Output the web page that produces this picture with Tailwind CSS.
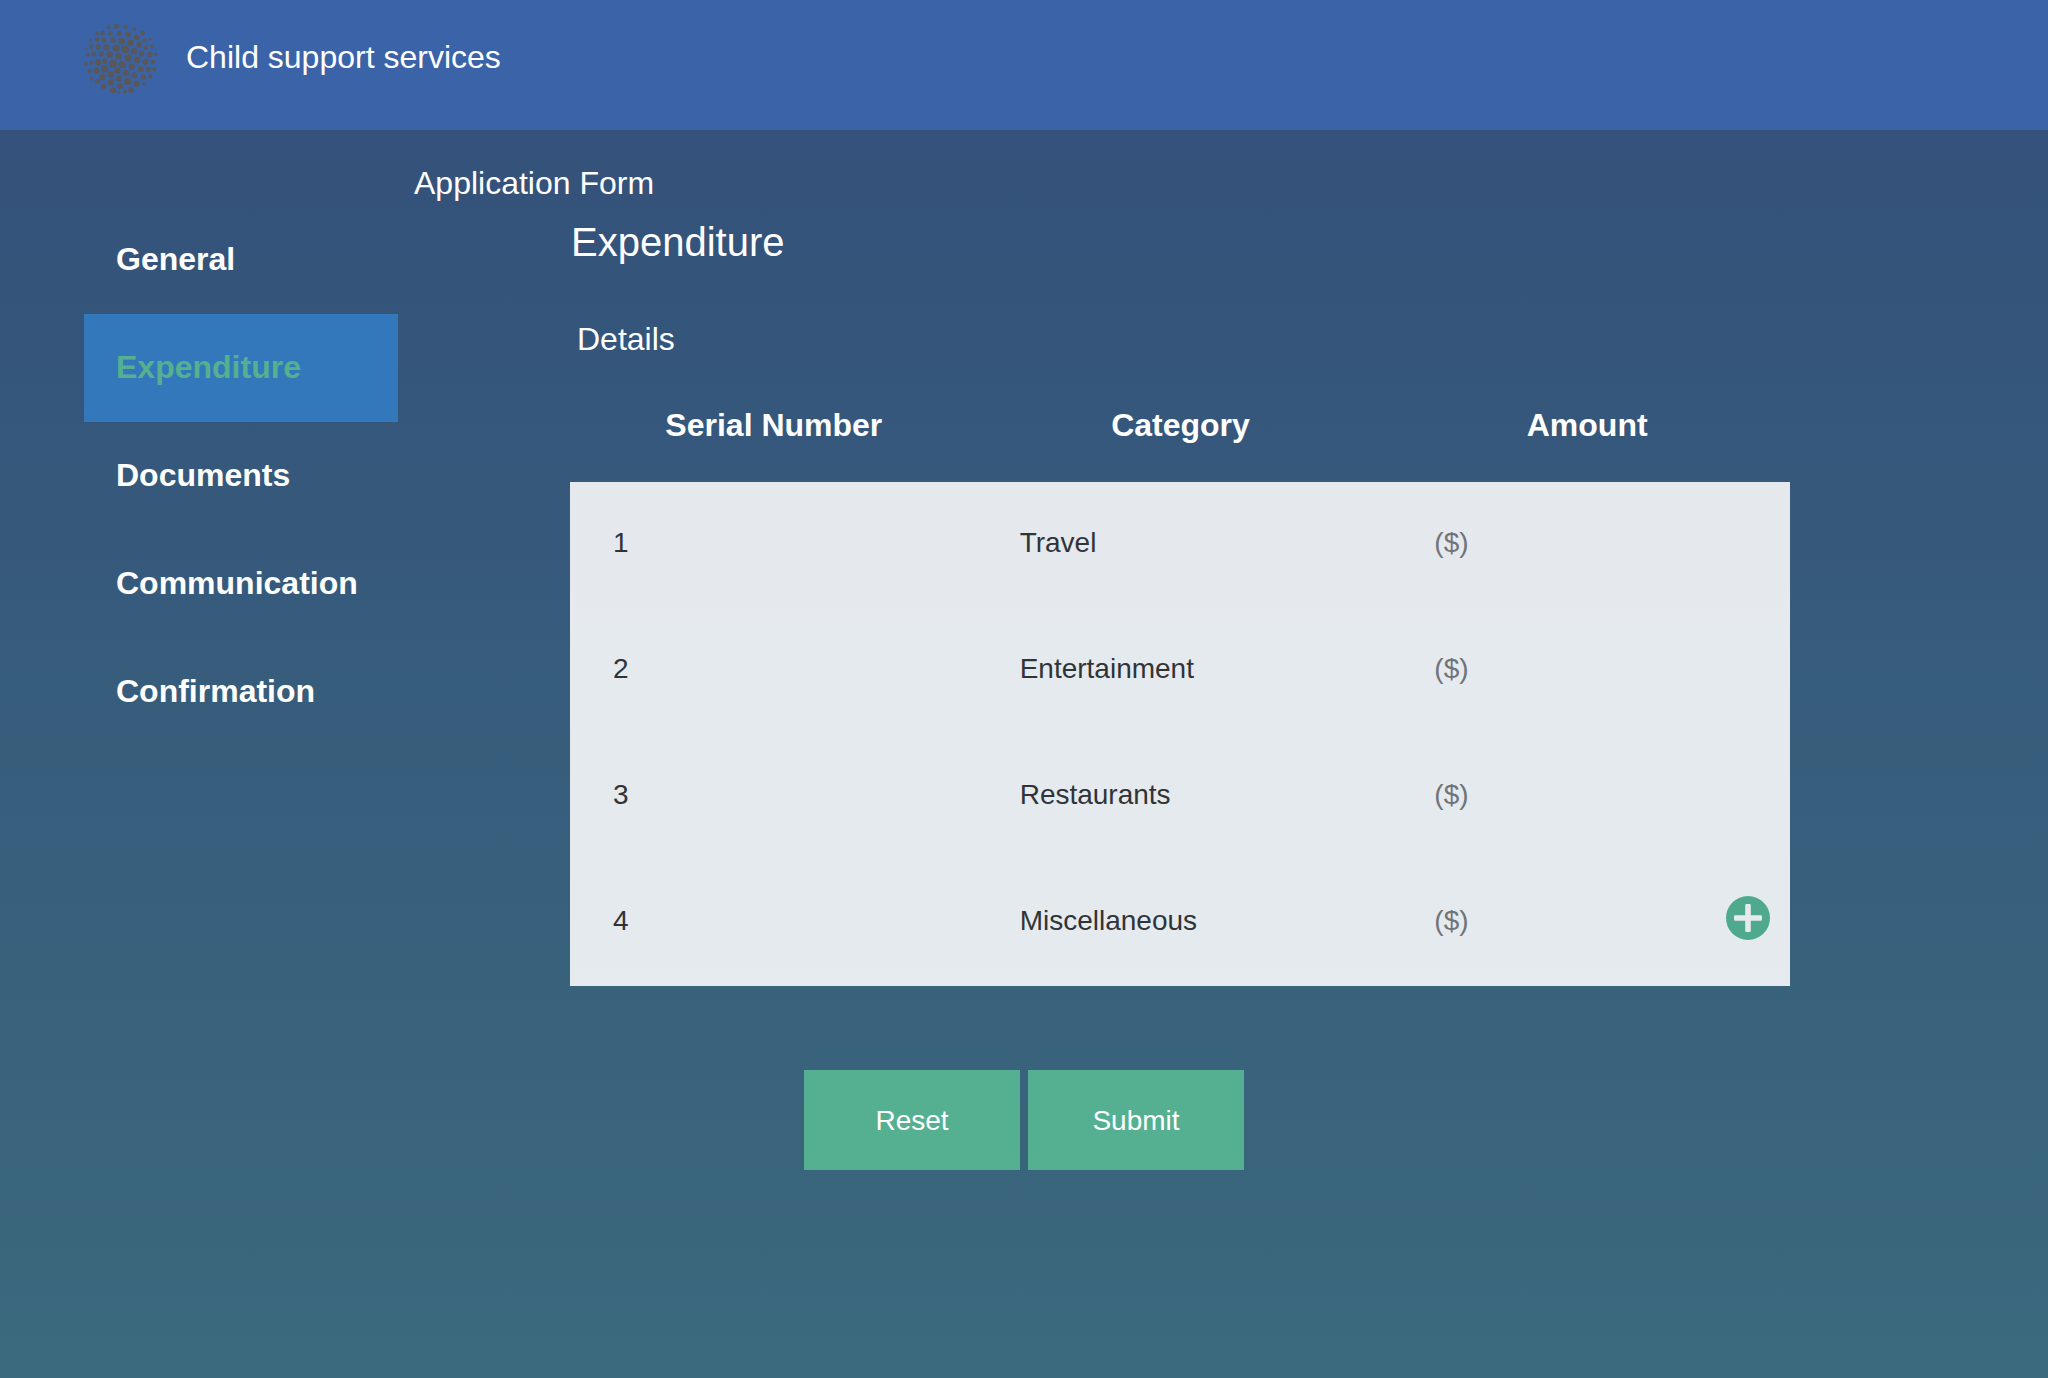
<!DOCTYPE html>
<html lang="en">
<head>
<meta charset="utf-8">
<title>Child support services</title>
<script src="https://cdn.jsdelivr.net/npm/@tailwindcss/browser@4"></script>
</head>
<body class="h-[1378px] flex flex-col overflow-hidden font-['Liberation_Sans',Arial,sans-serif] text-white bg-linear-to-b from-[#334f7a] to-[#3b697d]">
<header class="flex h-[130px] shrink-0 bg-[#3b63a8] pl-[84px] pt-[22px]">
  <svg class="size-[74px] shrink-0" viewBox="42 36 222 222" aria-hidden="true"><g id="dots" fill="#58585a"></g></svg>
  <h1 class="pl-[28px] pt-[17px] text-[32px] leading-[36px]">Child support services</h1>
</header>
<main class="flex flex-1 flex-col">
  <h2 class="pt-[35px] pl-[414px] text-[32px] leading-[36px]">Application Form</h2>
  <div class="flex items-start pl-[84px]">
    <nav class="mt-[5px] flex w-[314px] flex-col text-[32px] font-bold leading-[36px]">
      <a class="h-[108px] px-8 pt-[35px]">General</a>
      <a class="h-[108px] bg-[#3478bc] px-8 pt-[35px] text-[#55af91]">Expenditure</a>
      <a class="h-[108px] px-8 pt-[35px]">Documents</a>
      <a class="h-[108px] px-8 pt-[35px]">Communication</a>
      <a class="h-[108px] px-8 pt-[35px]">Confirmation</a>
    </nav>
    <section class="ml-[172px] w-[1220px]">
      <h3 class="mt-[19px] pl-px text-[40px] leading-[44px]">Expenditure</h3>
      <h4 class="mt-[57px] pl-[7px] text-[32px] leading-[36px]">Details</h4>
      <div class="mt-[50px] grid h-[75px] grid-cols-3 text-center text-[32px] font-bold leading-[36px]">
        <div class="pl-px">Serial Number</div><div class="pl-px">Category</div><div class="pl-px">Amount</div>
      </div>
      <div class="bg-white/87 text-[28px] leading-[32px] text-[#303437]">
        <div class="grid h-[126px] grid-cols-3 pt-[45px]"><div class="pl-[43px]">1</div><div class="pl-[43px]">Travel</div><div class="pl-[51px] text-[#707478]">($)</div></div>
        <div class="grid h-[126px] grid-cols-3 pt-[45px]"><div class="pl-[43px]">2</div><div class="pl-[43px]">Entertainment</div><div class="pl-[51px] text-[#707478]">($)</div></div>
        <div class="grid h-[126px] grid-cols-3 pt-[45px]"><div class="pl-[43px]">3</div><div class="pl-[43px]">Restaurants</div><div class="pl-[51px] text-[#707478]">($)</div></div>
        <div class="grid h-[126px] grid-cols-3 pt-[36px]"><div class="pl-[43px] pt-[9px]">4</div><div class="pl-[43px] pt-[9px]">Miscellaneous</div>
          <div class="flex justify-between pl-[51px] pr-[20px] text-[#707478]"><span class="pt-[9px]">($)</span>
            <svg class="size-[44px]" viewBox="0 0 44 44"><circle cx="22" cy="22" r="22" fill="#4fa98c"/><path fill="#e6eaed" d="M20.4 8h3.2q1.2 0 1.2 1.2v10h10q1.2 0 1.2 1.2v3.2q0 1.2-1.2 1.2h-10v10q0 1.2-1.2 1.2h-3.2q-1.2 0-1.2-1.2v-10h-10q-1.2 0-1.2-1.2v-3.2q0-1.2 1.2-1.2h10v-10Q19.200 8 20.4 8Z"/></svg>
          </div>
        </div>
      </div>
    </section>
  </div>
  <div class="mt-[84px] flex justify-center gap-2 text-[28px] leading-[32px]">
    <button class="h-[100px] w-[216px] bg-[#55af91] pt-px">Reset</button>
    <button class="h-[100px] w-[216px] bg-[#55af91] pt-px">Submit</button>
  </div>
</main>
<script>
  // Logo dots: x, y, radius
  const dots = [
    [116,52,5],[139,49,7],[167,50,6],[193,57,5],[81,70,5],[98,69,6],[122,70,6],[148,70,7],[174,74,8],[200,81,8],[218,69,6],
    [61,91,4.500],[81,89,6.500],[102,90,7],[129,90,8],[155,93,9.500],[182,98,9],[207,104,8],[224,91,6],[240,87,4],
    [49,117,3.500],[64,110,6],[84,111,7.500],[110,112,9],[138,114,10],[165,118,11.500],[192,124,9.500],[227,113,6],[246,109,6],
    [52,134,5.500],[71,132,7],[94,132,7.500],[119,134,9.500],[146,139,10],[175,144,10.500],[202,150,9.500],[215,131,8],[239,134,8],[258,133,4.500],
    [48,162,5.500],[64,158,6],[84,156,9],[105,153,7.500],[129,161,12],[157,163,10.500],[185,170,9],[227,155,8.500],[250,156,6],
    [59,183,6],[80,182,9],[104,176,10.500],[142,182,9],[167,189,9],[212,177,8.500],[235,178,7.500],[253,178,6],
    [65,206,5],[83,214,7],[98,201,9],[123,194,9.500],[147,205,9],[193,196,8.500],[220,201,7.500],[240,199,6],
    [101,229,8],[123,217,9.500],[150,228,8.500],[173,214,10.500],[200,221,9],[221,221,4],
    [129,241,9],[146,247,4],[165,245,5.500],[183,240,8]
  ];
  document.getElementById('dots').innerHTML = dots.map(([x, y, r]) => `<circle cx="${x}" cy="${y}" r="${r + 0.6}"/>`).join('');
</script>
</body>
</html>
